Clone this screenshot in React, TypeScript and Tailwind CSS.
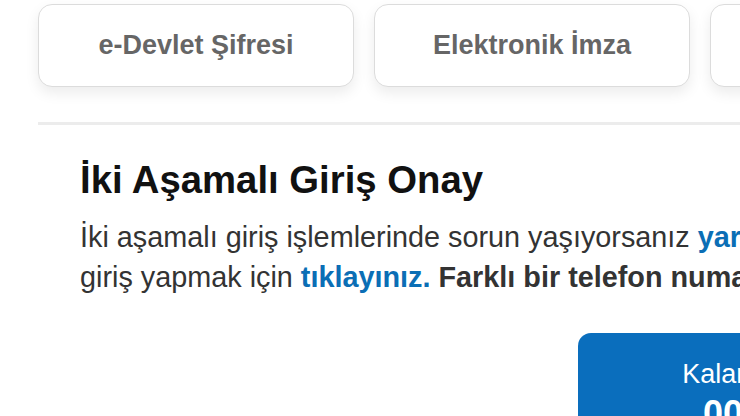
import React from 'react'

const tabs = ['e-Devlet Şifresi', 'Elektronik İmza', 'Mobil İmza']

export default function App() {
  return (
    <div
      className="w-[740px] h-[416px] overflow-hidden bg-white"
      style={{ fontFamily: '"Liberation Sans", Arial, sans-serif' }}
    >
      <div className="w-[1100px] pl-[38px]">
        {/* Login method tabs */}
        <div className="flex gap-[20px] pt-[4px]">
          {tabs.map((t) => (
            <div
              key={t}
              className="w-[316px] h-[83px] shrink-0 flex items-center justify-center rounded-[14px] border border-[#dcdcdc] bg-white shadow-[0_6px_14px_rgba(0,0,0,0.08)]"
            >
              <span className="text-[27px] font-bold text-[#666]">{t}</span>
            </div>
          ))}
        </div>

        <div className="mt-[35px] h-[3px] bg-[#ececec]" />

        <div className="pl-[42px]">
          <h2 className="mt-[32px] text-[38.3px] leading-[45px] font-bold text-[#111]">
            İki Aşamalı Giriş Onay
          </h2>
          <div className="mt-[15px] text-[28.8px] leading-[40px] text-[#333]">
            <div className="whitespace-nowrap">
              İki aşamalı giriş işlemlerinde sorun yaşıyorsanız{' '}
              <a className="font-bold text-[#0b6eb5]">yardım sayfasından</a> veya yedek kodlarla
            </div>
            <div className="whitespace-nowrap">
              giriş yapmak için <a className="font-bold text-[#0b6eb5]">tıklayınız.</a>{' '}
              <span className="font-bold">Farklı bir telefon numarası ile devam etmek için</span>
            </div>
          </div>

          <div className="mt-[36px] pl-[498px]">
            <div className="w-[342px] rounded-[13px] bg-[#0a6ebd] pt-[23px] pb-[20px] text-center text-white">
              <div className="text-[27px] leading-[36px]">Kalan Süre</div>
              <div className="text-[36px] leading-[44px] font-bold">00:59</div>
            </div>
          </div>
        </div>
      </div>
    </div>
  )
}
